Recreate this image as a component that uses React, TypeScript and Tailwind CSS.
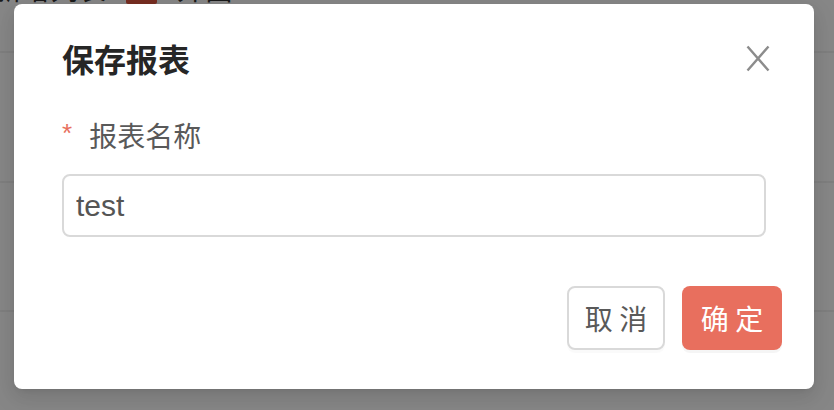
import React, { useState } from 'react';

const cjk = { fontFamily: '"Noto Sans CJK SC", "Liberation Sans", sans-serif' };

const CloseIcon: React.FC = () => (
  <svg width="24" height="27" viewBox="0 0 24 27" fill="none" stroke="#8c8c8c" strokeWidth={2.4}>
    <path d="M1.5 1.5L22.5 25.5M22.5 1.5L1.5 25.5" />
  </svg>
);

const App: React.FC = () => {
  const [name, setName] = useState('test');

  return (
    <div className="relative w-[834px] h-[410px] overflow-hidden bg-white" style={cjk}>
      {/* page behind the dialog */}
      <div className="flex flex-col">
        <div className="h-[53px] border-b-2 border-[#f0f0f0] overflow-hidden">
          <div className="flex items-center gap-[20px] -mt-[27px] text-[28px] leading-[31px] text-[#333]">
            <span className="-ml-[6px]">新增列表</span>
            <span className="w-[31px] h-[31px] bg-[#e0553f] rounded-[2px]" />
            <span>外面</span>
          </div>
        </div>
        <div className="h-[130px] border-b-2 border-[#f0f0f0]" />
        <div className="h-[129px] border-b-2 border-[#f0f0f0]" />
      </div>
      <div className="absolute inset-0 bg-black/[0.47]" />

      {/* dialog */}
      <div className="absolute left-[14px] top-[4px] w-[800px] h-[385px] bg-white rounded-[8px] shadow-[0_6px_16px_0_rgba(0,0,0,0.08),0_3px_6px_-4px_rgba(0,0,0,0.12),0_9px_28px_8px_rgba(0,0,0,0.05)] flex flex-col">
        <div className="flex items-center justify-between pt-[34px] pl-[48px] pr-[44px]">
          <h2 className="text-[32px] leading-[40px] font-bold text-[#262626]">保存报表</h2>
          <button className="flex items-center justify-center">
            <CloseIcon />
          </button>
        </div>

        <div className="px-[48px] pt-[39px]">
          <label className="flex items-center text-[28px] leading-[36px] text-[#595959]">
            <span className="text-[#e8705e] text-[26px] mr-[17px] -mt-[4px]" style={{ fontFamily: '"Liberation Sans", sans-serif' }}>*</span>
            报表名称
          </label>
          <input
            value={name}
            onChange={e => setName(e.target.value)}
            className="mt-[21px] w-full h-[63px] border-2 border-[#d9d9d9] rounded-[8px] px-[12px] text-[30px] text-[#555] outline-none"
            style={{ fontFamily: '"Liberation Sans", "Noto Sans CJK SC", sans-serif' }}
          />
        </div>

        <div className="flex justify-end gap-[17px] pt-[49px] pr-[32px]">
          <button className="w-[98px] h-[64px] border-2 border-[#d9d9d9] rounded-[8px] bg-white text-[28px] text-[#595959] shadow-[0_3px_0_rgba(0,0,0,0.02)]">
            取 消
          </button>
          <button className="w-[100px] h-[64px] rounded-[8px] bg-[#e86f5e] text-[28px] text-white shadow-[0_3px_0_rgba(0,0,0,0.04)]">
            确 定
          </button>
        </div>
      </div>
    </div>
  );
};

export default App;
